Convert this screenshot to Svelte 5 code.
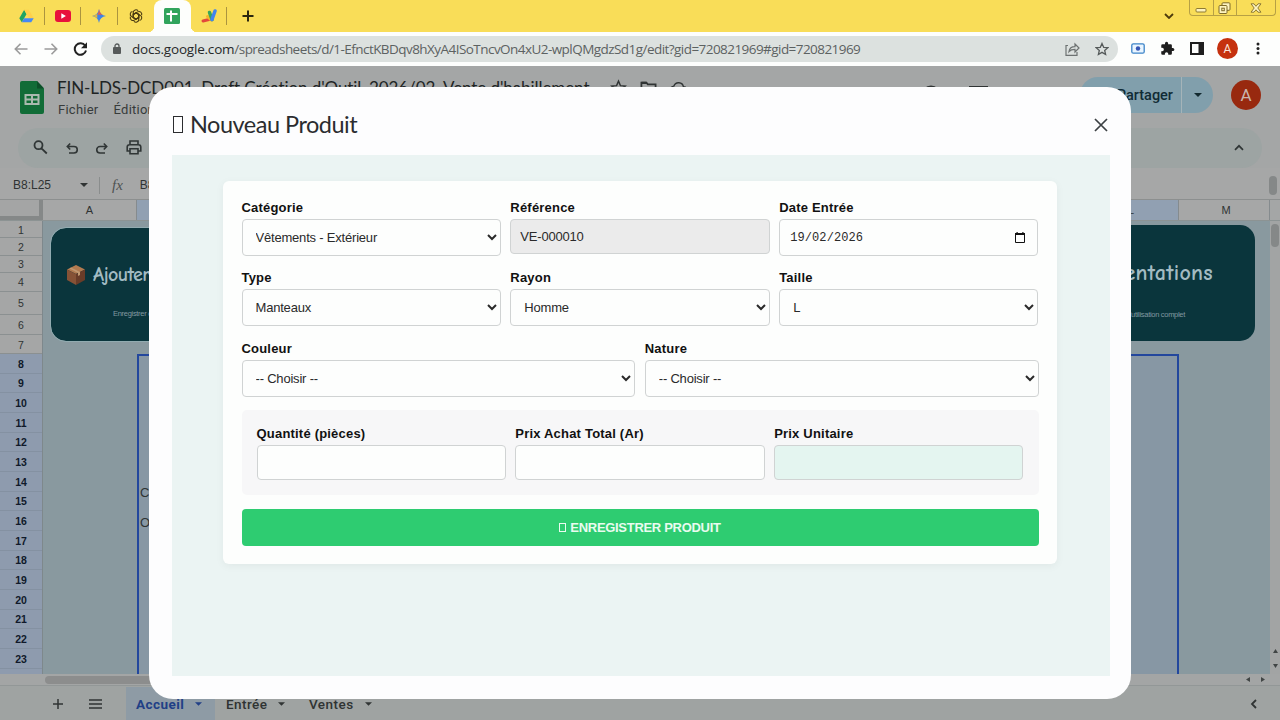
<script>
    let categorie = 'Vêtements - Extérieur';
    let reference = 'VE-000010';
    let dateEntree = '19/02/2026';
    let type = 'Manteaux';
    let rayon = 'Homme';
    let taille = 'L';
    let couleur = '';
    let nature = '';
    let quantite = '';
    let prixAchat = '';
    let open = true;

    // the first rows are taller or shorter than the default height
    const rows = [17, 17.5, 17, 19, 23.5, 20, 19];
    for (let i = 8; i <= 23; i++) rows.push(19.67);

    $: prixUnitaire = quantite && prixAchat ? Math.round(+prixAchat / +quantite) : '';
</script>

<div class="window">
    <div class="tabs">
        <div class="tab">
            <svg width="15" height="14" viewBox="0 0 24 22"><path fill="#1fa463" d="M8.3 1 .5 14.600l3.900 6.400L12 8.3z"/><path fill="#ffd04b" d="M8.3 1h7.400l7.800 13.600h-7.500z"/><path fill="#4688f4" d="M8.200 14.600h15.300L19.600 21H4.400z"/></svg>
        </div>
        <div class="tab">
            <svg width="16" height="12" viewBox="0 0 16 12"><rect width="16" height="12" rx="3" fill="#e8113c"/><path fill="#fff" d="m6.3 3.3 4.6 2.7-4.6 2.7z"/></svg>
        </div>
        <div class="tab">
            <svg width="14" height="14" viewBox="0 0 24 24"><path fill="#3f83e8" d="M12 0c1 7 5 11 12 12-7 1-11 5-12 12C11 17 7 13 0 12 7 11 11 7 12 0z"/><path fill="#e0604f" d="M12 0c.8 5 3 8 6 10h-9c2-3 2.500-6 3-10z"/><path fill="#e5b93c" d="M0 12c4-.5 7-2 9-4v8c-2-2-5-3.500-9-4z"/></svg>
        </div>
        <div class="tab plain">
            <svg width="14" height="14" viewBox="0 0 24 24" fill="none" stroke="#4a3b12" stroke-width="1.900">
                {#each [0, 60, 120, 180, 240, 300] as angle}
                    <path transform="rotate({angle} 12 12)" d="M7.300 14.700V6a4.700 4.700 0 0 1 8.300-3M7.300 9.300 12 6.600l5.500 3.200"/>
                {/each}
            </svg>
        </div>
        <div class="tab active">
            <svg width="16" height="16" viewBox="0 0 16 16"><rect width="16" height="16" rx="1.500" fill="#31a45c"/><path stroke="#fff" stroke-width="2" d="M2.500 6h11M7 2.500v11"/></svg>
        </div>
        <div class="tab">
            <svg width="16" height="14" viewBox="0 0 16 14"><path stroke="#e3483b" stroke-width="3" stroke-linecap="round" d="m2 12 8-2"/><path stroke="#f5b62b" stroke-width="3" stroke-linecap="round" d="m6.500 7.500 4 3.500"/><path stroke="#36a65a" stroke-width="3.500" stroke-linecap="round" d="m8.500 3.500 2.500 7"/><path stroke="#4284ee" stroke-width="3.500" stroke-linecap="round" d="m14 2-3 8.500"/></svg>
        </div>
        <svg class="new-tab" width="12" height="12" viewBox="0 0 12 12"><path stroke="#2b270f" stroke-width="2" d="M6 .5v11M.5 6h11"/></svg>
        <svg class="tab-search" width="10" height="6" viewBox="0 0 10 6"><path fill="none" stroke="#4d3b0c" stroke-width="1.800" d="m1 1 4 4 4-4"/></svg>
        <div class="controls">
            <span><svg width="12" height="12" viewBox="0 0 12 12"><rect x="1" y="6.500" width="10" height="3.500" rx="1" fill="#fdf3c0" stroke="#8e7b32"/></svg></span>
            <span><svg width="13" height="12" viewBox="0 0 13 12"><g fill="#fdf3c0" stroke="#7e6b28"><rect x="4" y=".8" width="8" height="7.500" rx="1"/><rect x="1" y="3.500" width="8" height="8" rx="1"/><rect x="3.800" y="6.200" width="2.500" height="2.500"/></g></svg></span>
            <span class="last"><svg width="12" height="10" viewBox="0 0 12 10"><path fill="#fdf3c0" stroke="#8e7b32" d="M1 .8h3l2 2.500L8 .8h3L7.800 5 11 9.200H8L6 6.800 4 9.200H1L4.200 5z"/></svg></span>
        </div>
    </div>

    <div class="navbar">
        <svg width="14" height="12" viewBox="0 0 14 12"><path fill="none" stroke="#9b9b9b" stroke-width="1.600" d="M13.500 6H1.500M6.500.8 1.300 6l5.200 5.200"/></svg>
        <svg class="forward" width="14" height="12" viewBox="0 0 14 12"><path fill="none" stroke="#9b9b9b" stroke-width="1.600" d="M.5 6h12M7.500.8 12.700 6l-5.200 5.200"/></svg>
        <svg class="reload" width="15" height="14" viewBox="0 0 15 14"><path fill="none" stroke="#222" stroke-width="2" d="M12.200 3.800A5.700 5.700 0 1 0 13 8.500"/><path fill="#222" d="M14 .3v6H8z"/></svg>
        <div class="address">
            <svg width="8" height="11" viewBox="0 0 8 11"><rect y="4" width="8" height="7" rx="1" fill="#565a5a"/><path fill="none" stroke="#565a5a" stroke-width="1.300" d="M2 4.500V3a2 2 0 0 1 4 0v1.500"/></svg>
            <span class="url"><b>docs.google.com</b>/spreadsheets/d/1-EfnctKBDqv8hXyA4ISoTncvOn4xU2-wplQMgdzSd1g/edit?gid=720821969#gid=720821969</span>
            <svg class="share" width="15" height="14" viewBox="0 0 15 14"><path fill="none" stroke="#6d7272" stroke-width="1.200" d="M3 3.500H1v9.800h11V10M4 9.500c.5-3.300 2.500-4.800 6-4.800V2l4 4-4 4V7.300c-3 0-4.600.6-6 2.200z"/></svg>
            <svg width="14" height="14" viewBox="0 0 24 24"><path fill="none" stroke="#555a5a" stroke-width="2.200" d="m12 2.500 2.900 6.600 7.100.6-5.400 4.700 1.600 7L12 17.700l-6.200 3.700 1.600-7L2 9.700l7.100-.6z"/></svg>
        </div>
        <svg class="ext" width="14" height="11" viewBox="0 0 14 11"><rect x=".8" y=".8" width="12.400" height="9.400" rx="1.500" fill="#e9f5ff" stroke="#3d84c8" stroke-width="1.300"/><circle cx="7" cy="5.500" r="2.200" fill="#3454b4"/></svg>
        <svg width="15" height="15" viewBox="0 0 24 24"><path fill="#1e1e1e" d="M20.500 11H19V7a2 2 0 0 0-2-2h-4V3.500a2.500 2.500 0 0 0-5 0V5H4a2 2 0 0 0-2 2v3.800h1.500a2.700 2.700 0 0 1 0 5.400H2V20a2 2 0 0 0 2 2h3.800v-1.500a2.700 2.700 0 0 1 5.400 0V22H17a2 2 0 0 0 2-2v-4h1.500a2.500 2.500 0 0 0 0-5z"/></svg>
        <svg width="14" height="13" viewBox="0 0 14 13"><rect x="1" y="1" width="12" height="11" fill="none" stroke="#1e1e1e" stroke-width="2"/><path fill="#1e1e1e" d="M8.500 1H13v11H8.500z"/></svg>
        <span class="avatar small">A</span>
        <svg class="dots" width="4" height="13" viewBox="0 0 4 13"><g fill="#222"><circle cx="2" cy="2" r="1.500"/><circle cx="2" cy="6.500" r="1.500"/><circle cx="2" cy="11" r="1.500"/></g></svg>
    </div>

    <div class="docs">
        <header>
            <svg class="logo" width="24" height="33" viewBox="0 0 24 33"><path fill="#116c37" d="M2 0h15l7 7.500V31a2 2 0 0 1-2 2H2a2 2 0 0 1-2-2V2a2 2 0 0 1 2-2z"/><path fill="#0c4f29" d="M17 0v7.500h7z"/><path fill="none" stroke="#a9b9ae" stroke-width="2" d="M5.500 14h13v9h-13zM5.500 18.500h13M12 14v9"/></svg>
            <div class="doc">
                <div class="doc-title">
                    <span>FIN-LDS-DCD001_Draft Création d'Outil_2026/02_Vente d'habillement</span>
                    <svg width="17" height="17" viewBox="0 0 24 24"><path fill="none" stroke="#303434" stroke-width="2" d="m12 3 2.700 6.300 6.800.6-5.200 4.500 1.600 6.700-5.900-3.600-5.900 3.600 1.600-6.700L2.500 9.900l6.800-.6z"/></svg>
                    <svg width="17" height="17" viewBox="0 0 24 24"><path fill="none" stroke="#303434" stroke-width="2.500" d="M2 5h7l2 2.500h11V20H2z"/><path fill="#303434" d="M2 4h7l2 3H2z"/></svg>
                    <svg width="17" height="17" viewBox="0 0 24 24"><path fill="none" stroke="#303434" stroke-width="2" d="M6 20a5 5 0 0 1-.5-10 7 7 0 0 1 13.500 1 4.500 4.500 0 0 1 0 9z"/></svg>
                </div>
                <div class="menu"><span>Fichier</span><span>Édition</span></div>
            </div>
            <svg class="history" width="20" height="20" viewBox="0 0 20 20"><circle cx="10" cy="10" r="8.500" fill="none" stroke="#303434" stroke-width="2"/><path fill="none" stroke="#303434" stroke-width="1.500" d="M10 5v5l4 2"/></svg>
            <svg class="comment" width="19" height="19" viewBox="0 0 19 19"><path fill="none" stroke="#303434" stroke-width="2" d="M1 1h17v16l-4-4H1z"/></svg>
            <div class="partager"><span>Partager</span><i><svg width="8" height="4" viewBox="0 0 8 4"><path fill="#12292f" d="M0 0h8L4 4z"/></svg></i></div>
            <span class="avatar">A</span>
        </header>

        <div class="toolbar">
            <svg width="15" height="15" viewBox="0 0 15 15"><path fill="none" stroke="#303636" stroke-width="1.800" d="M9.500 5.200a4 4 0 1 1-8 0 4 4 0 0 1 8 0zM8.500 8.300l5.300 5.200"/></svg>
            <svg width="12" height="12" viewBox="0 0 12 12"><path fill="none" stroke="#303636" stroke-width="1.600" d="M4.200 1.500 1.300 4.500l2.900 3M1.500 4.500H8a3.200 3.200 0 0 1 0 6.500H3"/></svg>
            <svg width="12" height="12" viewBox="0 0 12 12"><path fill="none" stroke="#303636" stroke-width="1.600" d="m7.800 1.500 2.900 3-2.900 3M10.500 4.500H4A3.200 3.200 0 0 0 4 11h5"/></svg>
            <svg width="16" height="15" viewBox="0 0 16 15"><path fill="none" stroke="#303636" stroke-width="1.600" d="M4 4.500V1h8v3.500M4 11H1.200V7a2.300 2.300 0 0 1 2.300-2.300h9A2.300 2.300 0 0 1 14.800 7v4H12M4 8.800h8v5H4z"/></svg>
            <svg class="collapse" width="10" height="7" viewBox="0 0 10 7"><path fill="none" stroke="#303636" stroke-width="1.700" d="m1 5.800 4-4 4 4"/></svg>
        </div>

        <div class="formula">
            <span class="name">B8:L25</span>
            <svg width="8" height="4" viewBox="0 0 8 4"><path fill="#303434" d="M0 0h8L4 4z"/></svg>
            <span class="fx">fx</span>
            <span class="value">B8</span>
            <span class="thumb"></span>
        </div>

        <div class="columns">
            <span class="corner"></span>
            <span class="col a">A</span>
            <span class="col selected">L</span>
            <span class="col m">M</span>
            <span class="end"></span>
        </div>

        <div class="grid">
            <div class="row-heads">
                {#each rows as height, i}
                    <div class="row-head" class:selected={i >= 7} style="height: {height}px">{i + 1}</div>
                {/each}
                <div class="row-head selected rest"></div>
            </div>
            <div class="cells">
                <div class="drawing left">
                    <div class="heading">
                        <svg width="18" height="20" viewBox="0 0 18 20"><path fill="#b17a50" d="m9 0 9 4.500L9 9 0 4.500z"/><path fill="#865236" d="M0 4.500 9 9v11l-9-5z"/><path fill="#693c28" d="M18 4.500 9 9v11l9-5z"/><path fill="#c09871" d="m4 2.500 9 4.500v3l-2 1V8L2.500 3.500z"/></svg>
                        <span>Ajouter</span>
                    </div>
                    <small>Enregistrer des produits</small>
                </div>
                <div class="drawing right">
                    <div class="heading"><span>Documentations</span></div>
                    <small>Guide d'utilisation complet</small>
                </div>
                <div class="selection"><span>C</span><span>O</span></div>
            </div>
            <div class="vscroll">
                <span class="thumb"></span>
                <div class="arrows">
                    <svg width="5" height="4" viewBox="0 0 5 4"><path fill="#414545" d="M0 4h5L2.500 0z"/></svg>
                    <svg width="5" height="4" viewBox="0 0 5 4"><path fill="#414545" d="M0 0h5L2.500 4z"/></svg>
                </div>
            </div>
        </div>

        <div class="hscroll">
            <span class="bar"></span>
            <svg width="4" height="5" viewBox="0 0 4 5"><path fill="#414545" d="M4 0v5L0 2.500z"/></svg>
            <svg width="4" height="5" viewBox="0 0 4 5"><path fill="#414545" d="M0 0v5l4-2.500z"/></svg>
        </div>

        <footer>
            <svg class="add" width="10" height="10" viewBox="0 0 10 10"><path stroke="#303434" stroke-width="1.500" d="M5 0v10M0 5h10"/></svg>
            <svg class="list" width="13" height="10" viewBox="0 0 13 10"><path stroke="#303434" stroke-width="1.500" d="M0 1h13M0 5h13M0 9h13"/></svg>
            <div class="sheet current">Accueil <svg width="7" height="4" viewBox="0 0 8 4"><path fill="#213f86" d="M0 0h8L4 4z"/></svg></div>
            <div class="sheet entree">Entrée <svg width="7" height="4" viewBox="0 0 8 4"><path fill="#303434" d="M0 0h8L4 4z"/></svg></div>
            <div class="sheet ventes">Ventes <svg width="7" height="4" viewBox="0 0 8 4"><path fill="#303434" d="M0 0h8L4 4z"/></svg></div>
            <svg class="panel" width="7" height="10" viewBox="0 0 7 10"><path fill="none" stroke="#303434" stroke-width="1.800" d="M6 1 2 5l4 4"/></svg>
        </footer>
    </div>

    {#if open}
    <div class="modal">
        <div class="modal-title">
            <h1><i class="glyph"></i>Nouveau Produit</h1>
            <button class="close" aria-label="Fermer" on:click={() => open = false}>
                <svg width="14" height="14" viewBox="0 0 14 14"><path stroke="#3c4043" stroke-width="1.700" d="m1 1 12 12M13 1 1 13"/></svg>
            </button>
        </div>
        <div class="frame">
            <form on:submit|preventDefault>
                <div class="row">
                    <label>Catégorie
                        <select bind:value={categorie}><option>Vêtements - Extérieur</option></select>
                    </label>
                    <label>Référence
                        <input class="readonly" readonly value={reference} />
                    </label>
                    <label>Date Entrée
                        <div class="date">
                            <input bind:value={dateEntree} />
                            <svg width="10" height="11" viewBox="0 0 10 11"><path fill="none" stroke="#111" d="M.5 1.500h9v9h-9z"/><path fill="#111" d="M0 1h10v2H0zM1.500 0h1.200v2H1.500zM7.300 0h1.200v2H7.300z"/></svg>
                        </div>
                    </label>
                </div>
                <div class="row">
                    <label>Type
                        <select bind:value={type}><option>Manteaux</option></select>
                    </label>
                    <label>Rayon
                        <select bind:value={rayon}><option>Homme</option></select>
                    </label>
                    <label>Taille
                        <select bind:value={taille}><option>L</option></select>
                    </label>
                </div>
                <div class="row">
                    <label>Couleur
                        <select bind:value={couleur}><option value="">-- Choisir --</option></select>
                    </label>
                    <label>Nature
                        <select bind:value={nature}><option value="">-- Choisir --</option></select>
                    </label>
                </div>
                <div class="row prices">
                    <label>Quantité (pièces)
                        <input bind:value={quantite} />
                    </label>
                    <label>Prix Achat Total (Ar)
                        <input bind:value={prixAchat} />
                    </label>
                    <label>Prix Unitaire
                        <input class="computed" readonly value={prixUnitaire} />
                    </label>
                </div>
                <button class="save"><i class="glyph"></i>ENREGISTRER PRODUIT</button>
            </form>
        </div>
    </div>
    {/if}
</div>

<style>
    :global(body) {
        overflow: hidden;
    }

    .window {
        position: relative;
        width: 1280px;
        height: 720px;
        overflow: hidden;
        display: flex;
        flex-direction: column;
        font-family: "Liberation Sans", sans-serif;
        background: #a4a6a6;
    }

    .window * {
        box-sizing: border-box;
    }

    svg {
        display: block;
        flex: none;
    }

    /* Browser */
    .tabs {
        height: 32px;
        flex: none;
        display: flex;
        align-items: center;
        padding-left: 8px;
        background: #f9dd58;
    }

    .tab {
        position: relative;
        width: 36.5px;
        height: 32px;
        display: flex;
        align-items: center;
        justify-content: center;
    }

    .tab:not(.plain):not(.active)::after {
        content: "";
        position: absolute;
        right: 0;
        top: 7px;
        width: 1px;
        height: 18px;
        background: #ab943f;
    }

    .tab.active {
        background: #fdfefc;
        border-radius: 8px 8px 0 0;
    }

    .tab.active::before,
    .tab.active::after {
        content: "";
        position: absolute;
        bottom: 0;
        width: 6px;
        height: 6px;
    }

    .tab.active::before {
        left: -6px;
        background: radial-gradient(circle at 0 0, transparent 6px, #fdfefc 6.5px);
    }

    .tab.active::after {
        right: -6px;
        background: radial-gradient(circle at 100% 0, transparent 6px, #fdfefc 6.5px);
    }

    .new-tab {
        margin-left: 15px;
    }

    .tab-search {
        margin-left: auto;
    }

    .controls {
        align-self: flex-start;
        display: flex;
        height: 16px;
        margin: 0 4px 0 15px;
        border: 1px solid #b7a044;
        border-top: 0;
        border-radius: 0 0 4px 4px;
    }

    .controls span {
        width: 23.5px;
        display: flex;
        align-items: center;
        justify-content: center;
        border-right: 1px solid #b7a044;
    }

    .controls .last {
        width: 38px;
        border: 0;
    }

    .navbar {
        height: 34px;
        flex: none;
        display: flex;
        align-items: center;
        padding: 0 18px 1px 14px;
        background: #fdfefd;
    }

    .forward {
        margin-left: 16px;
    }

    .reload {
        margin: 0 13px 0 15px;
    }

    .address {
        width: 1017px;
        height: 26px;
        display: flex;
        align-items: center;
        padding: 0 9px 0 12px;
        border-radius: 13px;
        background: #dce1df;
    }

    .url {
        flex: 1;
        margin-left: 11px;
        font: 13.5px "Open Sans", sans-serif;
        letter-spacing: -0.55px;
        color: #5c6262;
        white-space: nowrap;
    }

    .url b {
        font-weight: normal;
        letter-spacing: -0.2px;
        color: #262929;
    }

    .share {
        margin-right: 15px;
    }

    .ext {
        margin: 0 15px 0 13px;
    }

    .ext + svg {
        margin-right: 15px;
    }

    .avatar {
        width: 30px;
        height: 30px;
        display: flex;
        align-items: center;
        justify-content: center;
        border-radius: 50%;
        background: #98290f;
        color: #c9b5ad;
        font: 17px Roboto, sans-serif;
    }

    .avatar.small {
        width: 21px;
        height: 21px;
        margin: 0 18px 0 13px;
        background: #c5310f;
        color: #fbe5dc;
        font-size: 12px;
    }

    /* Spreadsheet */
    .docs {
        flex: 1;
        display: flex;
        flex-direction: column;
        color: #2f3333;
    }

    header {
        height: 62px;
        display: flex;
        align-items: flex-start;
        padding: 15px 19px 0 20px;
    }

    .doc {
        margin-left: 13px;
        width: 868px;
    }

    .doc-title {
        display: flex;
        align-items: center;
        height: 18px;
        margin-top: -3px;
        gap: 13px;
        font: 17px Lato, sans-serif;
        color: #202424;
        white-space: nowrap;
    }

    .doc-title span {
        width: 540px;
        letter-spacing: -0.08px;
    }

    .menu {
        display: flex;
        gap: 15px;
        margin-top: 5px;
        padding-left: 1px;
        font: 13px/18px Roboto, sans-serif;
        letter-spacing: 0.25px;
        color: #373b3b;
    }

    .history {
        margin: 4px 0 0 -4px;
    }

    .comment {
        margin: 5px 0 0 28px;
    }

    .partager {
        display: flex;
        height: 36px;
        margin: -4px 0 0 auto;
        width: 133px;
        border-radius: 18px;
        background: #819fac;
        color: #102b35;
        font: 500 14.500px/37px Roboto, sans-serif;
    }

    .partager span {
        flex: 1;
        padding-right: 8px;
        text-align: right;
        border-right: 1px solid #a5b4b9;
    }

    .partager i {
        width: 31px;
        display: grid;
        place-items: center;
    }

    header > .avatar {
        margin: -1px 0 0 18px;
    }

    .toolbar {
        height: 40px;
        margin: 0 18px;
        display: flex;
        align-items: center;
        padding: 0 18px 0 15px;
        border-radius: 20px;
        background: #9da4a3;
    }

    .toolbar svg {
        margin: 0 18px 1px 0;
    }

    .toolbar .collapse {
        margin: 0 0 2px auto;
    }

    .formula {
        height: 31px;
        display: flex;
        align-items: center;
        padding: 3px 3px 0 13px;
        font-size: 12px;
        background: #a6a7a7;
    }

    .name {
        width: 67px;
    }

    .fx {
        margin-left: 11px;
        padding-left: 12px;
        border-left: 1px solid #8a8d8d;
        font: italic 15px "Liberation Serif", serif;
        color: #4e5252;
    }

    .value {
        margin-left: 17px;
    }

    .formula .thumb {
        margin-left: auto;
    }

    .thumb {
        width: 8px;
        height: 19px;
        border-radius: 4px;
        background: #858888;
    }

    .columns {
        height: 22px;
        flex: none;
        display: flex;
        border-top: 1px solid #8c8f8f;
        border-bottom: 1px solid #8c9393;
        font-size: 11px;
        line-height: 21px;
        text-align: center;
    }

    .corner {
        width: 43px;
        border-right: 4px solid #858888;
        border-bottom: 4px solid #858888;
        background: #a4a5a5;
    }

    .col {
        border-right: 1px solid #858b8e;
        background: #a6a7a7;
    }

    .col.a {
        width: 94px;
    }

    .col.selected {
        width: 1042px;
        padding-right: 44px;
        background: #91a0b2;
        text-align: right;
    }

    .col.m {
        width: 91px;
        padding-left: 4px;
    }

    .grid {
        height: 453px;
        display: flex;
    }

    .row-heads {
        width: 43px;
        display: flex;
        flex-direction: column;
        border-right: 1px solid #7e888c;
    }

    .row-head {
        flex: none;
        display: flex;
        align-items: center;
        justify-content: center;
        padding-top: 1px;
        border-bottom: 1px solid #8b9091;
        background: #a5a6a6;
        font-size: 10.500px;
    }

    .row-head.selected {
        background: #8e9bae;
        border-color: #8491a2;
        color: #10192a;
        font-weight: bold;
    }

    .row-head.rest {
        flex: 1 1 0;
        border: 0;
    }

    .cells {
        position: relative;
        width: 1227px;
        overflow: hidden;
        background: #89999f;
    }

    .drawing {
        position: absolute;
        top: 7px;
        width: 320px;
        height: 113px;
        border-radius: 15px;
        outline: 1px solid #91abb0;
        background: #0a353c;
        color: #a2bbc2;
    }

    .left {
        left: 8px;
    }

    .right {
        right: 15px;
        top: 4px;
        height: 116px;
        outline: 0;
    }

    .heading {
        display: flex;
        align-items: center;
        gap: 8px;
        padding: 35px 0 0 16px;
        font: bold 20px/24px "Comic Neue", "Comic Sans MS", "DejaVu Sans Condensed", sans-serif;
        letter-spacing: -0.6px;
    }

    .drawing small {
        display: block;
        margin: 21px 0 0 62px;
        font-size: 7.500px;
        line-height: 12px;
        letter-spacing: -0.3px;
        color: #8199a0;
    }

    .right .heading {
        justify-content: flex-end;
        padding: 36px 42px 0 0;
        font-size: 22px;
        letter-spacing: 0.3px;
    }

    .right small {
        margin: 24px 70px 0 0;
        text-align: right;
    }

    .selection {
        position: absolute;
        left: 94px;
        top: 133px;
        width: 1042px;
        height: 330px;
        padding: 122px 0 0 1px;
        border: 2px solid #23479d;
        background: #8797a4;
        font-size: 13px;
        line-height: 30px;
    }

    .selection span {
        display: block;
    }

    .vscroll {
        width: 10px;
        display: flex;
        flex-direction: column;
        justify-content: space-between;
        background: #a2a4a4;
    }

    .vscroll .thumb {
        height: 23px;
        margin: 3px 0 0 1px;
    }

    .arrows {
        display: grid;
        gap: 11px;
        padding: 0 0 6px 3px;
    }

    .hscroll {
        height: 12px;
        display: flex;
        align-items: center;
        gap: 11px;
        padding: 0 15px 0 45px;
        background: #a3a5a5;
        border-bottom: 1px solid #929797;
    }

    .bar {
        width: 400px;
        height: 8px;
        margin-right: auto;
        border-radius: 4px;
        background: #8c8d8d;
    }

    footer {
        height: 34px;
        display: flex;
        align-items: center;
        padding: 2px 23px 0 53px;
        background: #9fa3a2;
        font: 500 13.500px Roboto, sans-serif;
        letter-spacing: 0.45px;
    }

    .list {
        margin: 0 24px 0 26px;
    }

    .sheet {
        height: 34px;
        display: flex;
        align-items: center;
        gap: 11px;
        padding-left: 10px;
        white-space: nowrap;
    }

    .sheet.current {
        width: 89px;
        background: #8e9ba5;
        color: #213f86;
        font-weight: bold;
    }

    .sheet.entree {
        width: 84px;
        padding-left: 11px;
    }

    .panel {
        margin-left: auto;
    }

    /* Dialog */
    .modal {
        position: absolute;
        left: 149px;
        top: 87px;
        width: 982px;
        height: 612px;
        display: flex;
        flex-direction: column;
        padding: 0 21px 23px 23px;
        border-radius: 24px;
        background: #fdfdfe;
    }

    .modal-title {
        height: 68px;
        display: flex;
        align-items: center;
        justify-content: space-between;
    }

    h1 {
        display: flex;
        align-items: center;
        margin: 6px 0 0;
        font: 23.500px/32px Lato, sans-serif;
        letter-spacing: -0.5px;
        color: #2b2c2f;
    }

    .glyph {
        width: 10px;
        height: 17px;
        margin: 0 7px 0 1px;
        border: 1px solid currentColor;
    }

    .close {
        margin-top: 7px;
        padding: 2px;
        border: 0;
        background: none;
        cursor: pointer;
    }

    .frame {
        flex: 1;
        padding: 26px 53px 0 51px;
        background: #ebf4f3;
    }

    form {
        height: 383px;
        padding: 19px 18.500px 0;
        border-radius: 6px;
        background: #fdfefd;
        box-shadow: 0 2px 8px rgba(0, 0, 0, 0.05);
    }

    .row {
        display: flex;
        gap: 9.500px;
        height: 70.300px;
    }

    label {
        flex: 1 1 0;
        font-size: 13px;
        line-height: 15px;
        font-weight: bold;
        color: #111;
        letter-spacing: 0.2px;
    }

    input,
    select {
        display: block;
        width: 100%;
        height: 35px;
        margin-top: 4px;
        padding: 0 9px;
        border: 1px solid #d0d3d3;
        border-radius: 4px;
        background-color: #fdfefd;
        color: #2a2a2a;
        font: 13px "Liberation Sans", sans-serif;
        letter-spacing: -0.2px;
        outline: none;
    }

    select {
        height: 37px;
    }

    .readonly {
        background: #ebebeb;
    }

    .date {
        height: 37px;
        margin-top: 4px;
        display: flex;
        align-items: center;
        padding: 0 12px 0 10px;
        border: 1px solid #d0d3d3;
        border-radius: 4px;
    }

    .date input {
        height: 30px;
        margin: 0;
        padding: 0;
        border: 0;
        font: 12px "Liberation Mono", monospace;
        letter-spacing: 0.1px;
    }

    .prices {
        height: 85px;
        margin-top: -1px;
        padding: 16px 15px 0;
        border-radius: 5px;
        background: #f7f7f8;
    }

    .computed {
        background: #e4f5f0;
    }

    .save {
        display: flex;
        align-items: center;
        justify-content: center;
        width: 100%;
        height: 37px;
        margin-top: 14px;
        border: 0;
        border-radius: 4px;
        background: #2ecc71;
        color: #e9fbef;
        font: bold 13px "Liberation Sans", sans-serif;
        letter-spacing: -0.3px;
    }

    .save .glyph {
        width: 7px;
        height: 9px;
        margin: 0 4px 0 0;
    }
</style>
